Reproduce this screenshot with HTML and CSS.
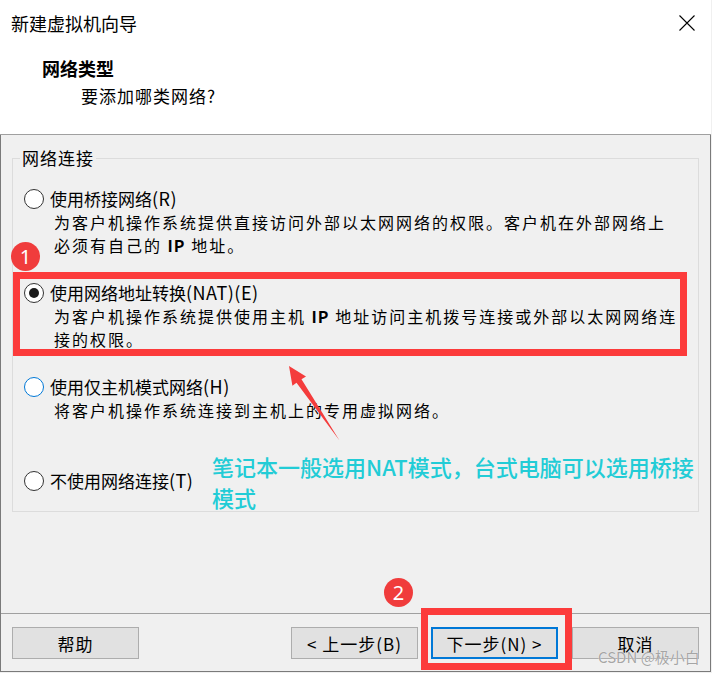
FILE: index.html
```html
<!DOCTYPE html>
<html lang="zh-CN">
<head>
<meta charset="utf-8">
<title>新建虚拟机向导</title>
<link rel="stylesheet" href="styles.css">
</head>
<body>
<div class="window">
  <header class="head">
    <div class="titlebar">
      <span class="title">新建虚拟机向导</span>
      <svg class="close" width="16" height="16" viewBox="0 0 16 16"><path d="M0.5 0.5 L15.5 15.5 M15.5 0.5 L0.5 15.5" stroke="#000" stroke-width="1.1" fill="none"/></svg>
    </div>
    <div class="h1">网络类型</div>
    <div class="h2">要添加哪类网络?</div>
  </header>
  <main class="body">
    <fieldset class="group">
      <legend>网络连接</legend>
      <div class="options">
        <div class="opt">
          <span class="radio"></span>
          <div class="opt-text">
            <div class="label">使用桥接网络<span class="lat">(R)</span></div>
            <div class="desc">为客户机操作系统提供直接访问外部以太网网络的权限。客户机在外部网络上<br>必须有自己的 <b>IP</b> 地址。</div>
          </div>
        </div>
        <div class="opt">
          <span class="radio checked"></span>
          <div class="opt-text">
            <div class="label">使用网络地址转换<span class="lat">(NAT)(E)</span></div>
            <div class="desc">为客户机操作系统提供使用主机 <b>IP</b> 地址访问主机拨号连接或外部以太网网络连<br>接的权限。</div>
          </div>
        </div>
        <div class="opt">
          <span class="radio focus"></span>
          <div class="opt-text">
            <div class="label">使用仅主机模式网络<span class="lat">(H)</span></div>
            <div class="desc">将客户机操作系统连接到主机上的专用虚拟网络。</div>
          </div>
        </div>
        <div class="opt">
          <span class="radio"></span>
          <div class="opt-text">
            <div class="label">不使用网络连接<span class="lat">(T)</span></div>
          </div>
        </div>
      </div>
    </fieldset>
    <footer class="foot">
      <button class="btn">帮助</button>
      <div class="nav">
        <button class="btn">&lt; 上一步(B)</button>
        <button class="btn primary">下一步(N) &gt;</button>
        <button class="btn">取消</button>
      </div>
    </footer>
  </main>

  <div class="mark box1"></div>
  <div class="mark box2"></div>
  <div class="badge badge1">1</div>
  <div class="badge badge2">2</div>
  <svg class="arrow" width="70" height="90" viewBox="0 0 70 90"><polygon points="9,6 26,16.5 21.5,19.3 59.5,80.5 16.5,22.7 12.4,25.8" fill="#f43c3c"/></svg>
  <div class="note">笔记本一般选用NAT模式，台式电脑可以选用桥接<br>模式</div>
  <div class="watermark">CSDN @极小白</div>
</div>
</body>
</html>
```
FILE: styles.css
```css
html, body {
  margin: 0;
  padding: 0;
  background: #f0f0f0;
}
body {
  font-family: "Noto Sans CJK SC", "Noto Sans", sans-serif;
  color: #000;
}
.window {
  position: relative;
  width: 711px;
  height: 672px;
}
.head {
  box-sizing: border-box;
  height: 135px;
  padding: 11px 0 0 0;
  background: #fff;
  border-bottom: 1px solid #a0a0a0;
}
.titlebar {
  display: flex;
  justify-content: space-between;
  align-items: center;
  height: 24px;
  padding: 0 16px 0 11px;
}
.title {
  font-size: 18px;
  line-height: 24px;
}
.close {
  display: block;
}
.h1 {
  margin: 21px 0 0 42px;
  font-size: 18px;
  font-weight: bold;
  line-height: 24px;
}
.h2 {
  margin: 4px 0 0 81px;
  font-size: 17px;
  line-height: 24px;
  letter-spacing: 1px;
}
.body {
  box-sizing: border-box;
  height: 537px;
  border-left: 1px solid #7a7a7a;
  border-right: 1px solid #7a7a7a;
  border-bottom: 1px solid #7a7a7a;
  display: flex;
  flex-direction: column;
}
.group {
  margin: 11px 11px 0 11px;
  padding: 0 0 18px 0;
  border: 1px solid #dcdcdc;
  min-width: 0;
}
.group legend {
  margin-left: 7px;
  padding: 0 2px;
  font-size: 17px;
  line-height: 24px;
  letter-spacing: 1px;
}
.options {
  padding: 17px 0 0 11px;
  display: flex;
  flex-direction: column;
  gap: 24px;
}
.opt {
  display: grid;
  grid-template-columns: 20px 1fr;
  column-gap: 6px;
}
.radio {
  box-sizing: border-box;
  width: 20px;
  height: 20px;
  margin-top: 2px;
  border: 1.3px solid #333;
  border-radius: 50%;
  background: #fff;
  display: flex;
  align-items: center;
  justify-content: center;
}
.radio.checked::after {
  content: "";
  width: 10px;
  height: 10px;
  border-radius: 50%;
  background: #1a1a1a;
}
.radio.focus {
  border-color: #0078d7;
}
.label {
  height: 24px;
  font-size: 17px;
  line-height: 24px;
  white-space: nowrap;
}
.label .lat {
  font-size: 18px;
  line-height: 1;
  letter-spacing: 0.5px;
}
.desc {
  min-height: 46px;
  margin-left: 4px;
  font-size: 16px;
  line-height: 23px;
  letter-spacing: 2px;
  white-space: nowrap;
}
.desc b {
  font-weight: bold;
  letter-spacing: 1px;
}
.foot {
  margin-top: auto;
  border-top: 1px solid #a0a0a0;
  padding: 13px 11px 12px 11px;
  display: flex;
  justify-content: space-between;
}
.nav {
  display: flex;
  gap: 13px;
}
.nav .primary + .btn {
  margin-left: 1px;
}
.btn {
  box-sizing: border-box;
  width: 127px;
  height: 32px;
  background: #e1e1e1;
  border: 1px solid #adadad;
  font-family: "Noto Sans CJK SC", "Noto Sans", sans-serif;
  font-size: 17px;
  letter-spacing: 1px;
  color: #000;
  padding: 0;
}
.btn.primary {
  border: 2px solid #0078d7;
}
.mark {
  position: absolute;
  box-sizing: border-box;
  border: 7px solid #fc3b3b;
}
.box1 {
  left: 13px;
  top: 272px;
  width: 674px;
  height: 84px;
}
.box2 {
  left: 421px;
  top: 608px;
  width: 151px;
  height: 62px;
}
.badge {
  position: absolute;
  width: 29px;
  height: 29px;
  border-radius: 50%;
  background: #f03c3c;
  color: #fff;
  font-family: "Noto Sans", sans-serif;
  font-size: 20px;
  line-height: 29px;
  text-align: center;
}
.badge1 {
  left: 11px;
  top: 242px;
}
.badge2 {
  left: 384px;
  top: 578px;
}
.arrow {
  position: absolute;
  left: 280px;
  top: 360px;
}
.note {
  position: absolute;
  left: 212px;
  top: 451px;
  font-size: 22px;
  font-weight: 500;
  line-height: 31px;
  color: #22ccd6;
  white-space: nowrap;
}
.watermark {
  position: absolute;
  left: 598px;
  top: 647px;
  font-family: "Noto Sans CJK SC", "Noto Sans", sans-serif;
  font-size: 15px;
  line-height: 20px;
  color: rgba(150, 150, 150, 0.85);
  text-shadow: 0 0 1px #fff;
  white-space: nowrap;
}
```
